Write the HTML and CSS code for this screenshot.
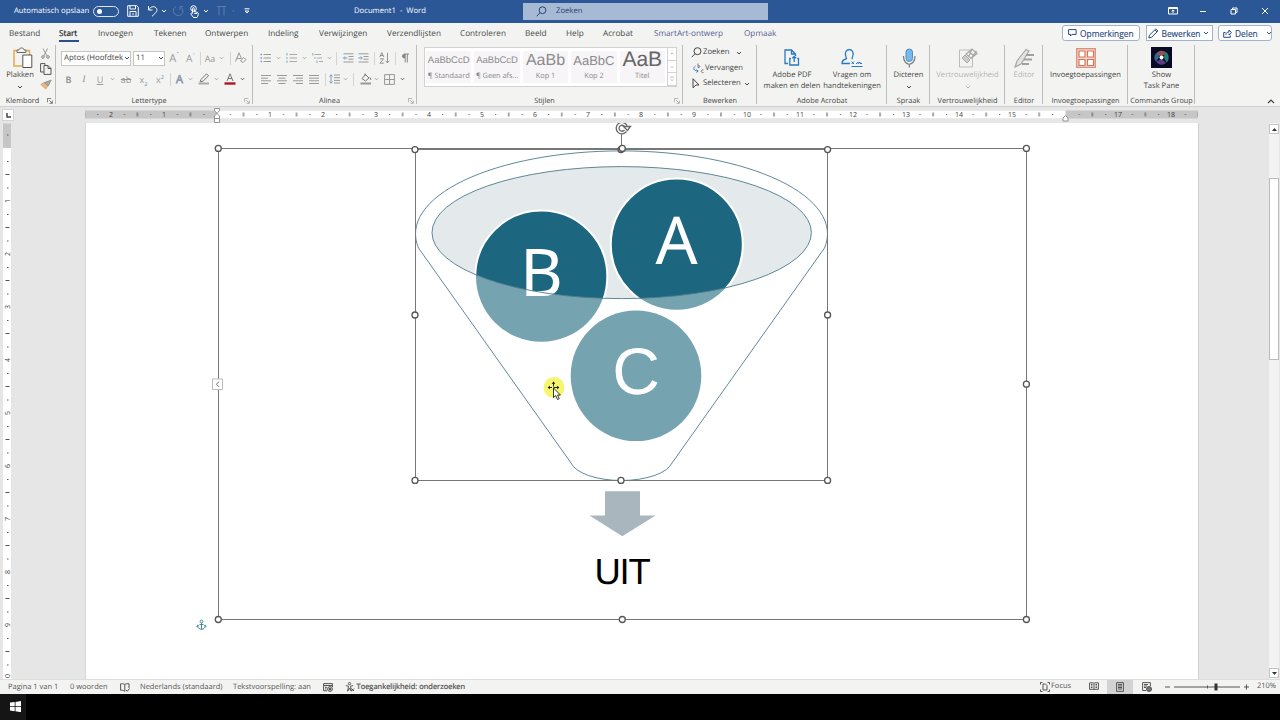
FILE: index.html
```html
<!DOCTYPE html>
<html lang="nl">
<head>
<meta charset="utf-8">
<title>Document1 - Word</title>
<link rel="stylesheet" href="styles.css">
</head>
<body>
<svg class="defs" width="0" height="0">
  <defs>
    <symbol id="chev" viewBox="0 0 6 4"><path d="M1 1l2 2 2-2" fill="none" stroke="currentColor" stroke-width="1"/></symbol>
    <symbol id="launch" viewBox="0 0 7 7"><path d="M.5 5V.5H5M2.500 2.500l3.500 3.500M6.200 3v3.200H3" fill="none" stroke="currentColor" stroke-width=".8"/></symbol>
  </defs>
</svg>
<div class="app">
  <header class="titlebar">
    <span class="autosave">Automatisch opslaan</span>
    <span class="toggle"><i></i></span>
    <div class="quick">
      <svg width="12" height="12" viewBox="0 0 12 12"><path d="M.7.7h9l1.600 1.600v9H.7zM3 .7v3.300h5.500V.7M3 11.200V6.500h6v4.700M5 9h2"/></svg>
      <svg width="12" height="12" viewBox="0 0 12 12"><path d="M1.500 1v4h4M1.700 4.800C3.500 1.500 7 .8 9 2.800c2.200 2.300.5 4.600-4 8.500"/></svg>
      <svg width="6" height="4"><use href="#chev"/></svg>
      <svg class="dim" width="12" height="12" viewBox="0 0 12 12"><path d="M4 1.500C0 3.500.5 10 6 10.500s6.500-6 2.500-8.500M8 5V1.500h3"/></svg>
      <svg width="11" height="13" viewBox="0 0 11 13"><circle cx="4.500" cy="3.500" r="2.800"/><path d="M3.600 8V3.500c0-1.200 1.600-1.200 1.600 0v3l3.500 1c1 .4.500 4-.8 5H4.500L1.800 9c0-1 1-1.200 1.800-.5M5.200 8.500h3"/></svg>
      <svg width="6" height="4"><use href="#chev"/></svg>
      <svg class="dim" width="12" height="12" viewBox="0 0 12 12"><path d="M1 1.500h9M3 1.500v9M8 1.500v9"/></svg>
      <svg class="dim" width="4" height="4" viewBox="0 0 4 4"><path d="M.5 2h2"/></svg>
      <svg width="6" height="6" viewBox="0 0 6 6"><path d="M.5.8h5M1 3l2 2 2-2z"/></svg>
    </div>
    <span class="doctitle">Document1&nbsp; -&nbsp; Word</span>
    <div class="search"><svg width="11" height="11" viewBox="0 0 11 11"><circle cx="6.500" cy="4.200" r="3.400"/><path d="M4 6.800L.7 10.200"/></svg><span>Zoeken</span></div>
    <div class="winbtns">
      <svg width="10" height="8" viewBox="0 0 10 8"><path d="M.5.5h9v6.500h-9zM.5 1.500h9M5 6V3M3.700 4.200L5 2.900l1.300 1.300"/></svg>
      <svg width="10" height="8" viewBox="0 0 10 8"><path d="M2 4.500h6"/></svg>
      <svg width="10" height="8" viewBox="0 0 10 8"><path d="M2 2.500h4.500V7H2zM3.500 2.500V1H8v4.500H6.500"/></svg>
      <svg width="10" height="8" viewBox="0 0 10 8"><path d="M2 1l6 6M8 1L2 7"/></svg>
    </div>
  </header>

  <nav class="tabs">
    <span>Bestand</span><span class="active">Start</span><span>Invoegen</span><span>Tekenen</span><span>Ontwerpen</span><span>Indeling</span><span>Verwijzingen</span><span>Verzendlijsten</span><span>Controleren</span><span>Beeld</span><span>Help</span><span>Acrobat</span><span class="ctx">SmartArt-ontwerp</span><span class="ctx">Opmaak</span>
    <div class="actions">
      <button class="act notes"><svg width="9" height="8" viewBox="0 0 9 8"><path d="M.6.6h7.500v4.800H4L2.500 7V5.400H.6z"/></svg>Opmerkingen</button>
      <button class="act edit"><svg width="11" height="11" viewBox="0 0 11 11"><path d="M.8 10l.8-3L7.800.9l2.100 2.100L3.700 9.200zM7 2l2 2"/></svg>Bewerken<svg width="6" height="4"><use href="#chev"/></svg></button>
      <button class="act share"><svg width="9" height="9" viewBox="0 0 9 9"><path d="M2.500 3.500H.7v4.800h6.600V6.500M2.800 6c.2-2.200 1.500-3 3.200-3V1.200l2.500 2.500L6 6V4.500"/></svg>Delen<svg width="6" height="4"><use href="#chev"/></svg></button>
    </div>
  </nav>

  <section class="ribbon">
    <div class="group tools">
      <div class="clip">
        <div class="big">
          <svg class="paste" width="22" height="22" viewBox="0 0 22 22"><path d="M5 3.500H2V19h8M14 3.500h3.500V8" stroke="#e3a94e" stroke-width="1.500"/><path d="M5 5.500V3h2C7 .3 12 .3 12 3h2v2.500z" stroke="#666"/><path d="M10.800 8h9v12.500h-9z" stroke="#555" fill="#fff"/></svg>
          <span>Plakken</span><svg width="6" height="4"><use href="#chev"/></svg>
        </div>
        <div class="side">
          <svg width="9" height="11" viewBox="0 0 9 11"><path d="M2 .5l4 7.500M6.500.5L2.800 8" stroke="#999"/><circle cx="2" cy="9" r="1.300" stroke="#888"/><circle cx="7" cy="9" r="1.300" stroke="#888"/></svg>
          <svg width="12" height="12" viewBox="0 0 12 12"><path d="M4 9H.6V.6H5V2M4 2.500h4l3 3v5.900H4zM8 2.500v3h3" stroke="#555"/></svg>
          <svg width="12" height="11" viewBox="0 0 12 11"><path d="M.8 5.500l5 4.500 2-3-3.800-3.500z" fill="#edb680" stroke="#c98a4e" stroke-width=".6"/><path d="M4.500 3.500l3.800 3.400L11.200 1z" fill="#aaa" stroke="#777" stroke-width=".6"/></svg>
        </div>
      </div>
      <footer><span>Klembord</span><svg class="dark" width="6" height="6"><use href="#launch"/></svg></footer>
    </div>

    <div class="group tools">
      <div class="rows">
        <div class="font1">
          <span class="combo">Aptos (Hoofdtek<svg width="6" height="4"><use href="#chev"/></svg></span>
          <span class="combo">11<svg width="6" height="4"><use href="#chev"/></svg></span>
          <span class="gA">A<sup>ˆ</sup></span><span class="gA sm">A<sup>ˇ</sup></span><hr>
          <span class="gAa">Aa</span><svg width="5" height="4"><use href="#chev"/></svg><hr>
          <svg width="12" height="12" viewBox="0 0 12 12"><path d="M.5 9.500L4 .8l2.500 6M1.800 6.500h4" stroke="#999"/><path d="M5.500 9l3-3.500 2.500 2-3 3z" stroke="#999"/></svg>
        </div>
        <div class="font2">
          <b>B</b><i class="ser">I</i><u>U</u><svg width="5" height="4"><use href="#chev"/></svg><s>ab</s><span class="x">x<sub>2</sub></span><span class="x">x<sup>2</sup></span><hr>
          <span class="fx">A</span><svg width="5" height="4"><use href="#chev"/></svg>
          <svg width="12" height="12" viewBox="0 0 12 12"><path d="M3 6.500L8.500.8l2 2L5 8.200l-3 .6z" stroke="#777"/><path d="M.5 9.500h10.500v2H.5z" fill="#aaa" stroke="none"/></svg><svg width="5" height="4"><use href="#chev"/></svg>
          <svg width="12" height="12" viewBox="0 0 12 12"><path d="M3 8L6 .8 9 8M4 5.500h4" stroke="#777"/><path d="M.5 9.300h11v2.400H.5z" fill="#b3122b" stroke="none"/></svg><svg class="dark" width="5" height="4"><use href="#chev"/></svg>
        </div>
      </div>
      <footer><span>Lettertype</span><svg width="6" height="6"><use href="#launch"/></svg></footer>
    </div>

    <div class="group tools">
      <div class="rows">
        <div class="par1">
          <svg width="11" height="10" viewBox="0 0 11 10"><path d="M3.500 1.500H11M3.500 5H11M3.500 8.500H11" stroke="#999"/><path d="M.5 1.500H2M.5 5H2M.5 8.500H2" stroke="#7b9dc4" stroke-width="1.500"/></svg><svg width="5" height="4"><use href="#chev"/></svg>
          <svg width="11" height="10" viewBox="0 0 11 10"><path d="M3.500 1.500H11M3.500 5H11M3.500 8.500H11" stroke="#aaa"/><path d="M1 0v2.500M1 4v2M1 7.500V10" stroke="#8aa8ca"/></svg><svg width="5" height="4"><use href="#chev"/></svg>
          <svg width="11" height="10" viewBox="0 0 11 10"><path d="M2.500 1.500H9M5 5h5M7 8.500h4" stroke="#aaa"/><path d="M.8 0v2.500M3 4v2M5 7.500V10" stroke="#8aa8ca"/></svg><svg width="5" height="4"><use href="#chev"/></svg><hr>
          <svg width="11" height="10" viewBox="0 0 11 10"><path d="M.5.8h10M5.500 3.500h5M5.500 6.200h5M.5 9h10" stroke="#999"/><path d="M4.500 5h-4M2 3.500L.6 5 2 6.500" stroke="#7b9dc4"/></svg>
          <svg width="11" height="10" viewBox="0 0 11 10"><path d="M.5.8h10M5.500 3.500h5M5.500 6.200h5M.5 9h10" stroke="#999"/><path d="M.3 5h4M2.800 3.500L4.200 5 2.800 6.500" stroke="#7b9dc4"/></svg><hr>
          <svg width="11" height="12" viewBox="0 0 11 12"><path d="M.8 5L2.800.6 4.800 5M1.500 3.500h2.600M1 6.800h3.500L1 11.200h3.800M8.500.8v10M6.600 8.800l1.900 2 1.900-2" stroke="#888" stroke-width=".9"/></svg><hr>
          <svg width="9" height="10" viewBox="0 0 9 10"><path d="M4 .8C0 .8 0 5.500 4 5.500z" fill="#888" stroke="none"/><path d="M3 1h5M4.200 1v8.500M6.300 1v8.500" stroke="#888"/></svg>
        </div>
        <div class="par2">
          <svg width="10" height="9" viewBox="0 0 10 9"><path d="M0 .5h10M0 3.200h7M0 5.800h10M0 8.500h7"/></svg>
          <svg width="10" height="9" viewBox="0 0 10 9"><path d="M0 .5h10M1.500 3.200h7M0 5.800h10M1.500 8.500h7"/></svg>
          <svg width="10" height="9" viewBox="0 0 10 9"><path d="M0 .5h10M3 3.200h7M0 5.800h10M3 8.500h7"/></svg>
          <svg width="10" height="9" viewBox="0 0 10 9"><path d="M0 .5h10M0 3.200h10M0 5.800h10M0 8.500h10"/></svg><hr>
          <svg width="11" height="10" viewBox="0 0 11 10"><path d="M5 1h6M5 3.700h6M5 6.400h6M5 9h6" stroke="#999"/><path d="M2 .8v8.400M.5 2.500L2 .8l1.500 1.700M.5 7.500L2 9.200l1.500-1.700" stroke="#7b9dc4"/></svg><svg width="5" height="4"><use href="#chev"/></svg><hr>
          <svg width="12" height="12" viewBox="0 0 12 12"><path d="M2 5.500l3.500-4 3.500 3.500-3.500 3zM5 3V.5M10 4.500l1 2.500" stroke="#777"/><path d="M.5 9.500h10.500v2H.5z" fill="#999" stroke="none"/></svg><svg width="5" height="4"><use href="#chev"/></svg>
          <svg width="11" height="11" viewBox="0 0 11 11"><path d="M.6.6h9.800v9.800H.6zM5.500.6v9.800M.6 5.500h9.800"/></svg><svg class="dark" width="5" height="4"><use href="#chev"/></svg>
        </div>
      </div>
      <footer><span>Alinea</span><svg width="6" height="6"><use href="#launch"/></svg></footer>
    </div>

    <div class="group tools">
      <div class="gallery">
        <div class="style"><em>AaBbCcD</em><span>¶ Standaard</span></div>
        <div class="style"><em>AaBbCcD</em><span>¶ Geen afs...</span></div>
        <div class="style"><em class="h1">AaBb</em><span>Kop 1</span></div>
        <div class="style"><em class="h2">AaBbC</em><span>Kop 2</span></div>
        <div class="style"><em class="ti">AaB</em><span>Titel</span></div>
        <div class="spin"><svg viewBox="0 0 9 13"><path d="M3 7l1.500-1.500L6 7"/></svg><svg viewBox="0 0 9 13"><path d="M3 6l1.500 1.500L6 6"/></svg><svg viewBox="0 0 9 13"><path d="M2.500 4.500h4M3 7l1.500 1.500L6 7"/></svg></div>
      </div>
      <footer><span>Stijlen</span><svg width="6" height="6"><use href="#launch"/></svg></footer>
    </div>

    <div class="group">
      <div class="find">
        <div><svg width="11" height="11" viewBox="0 0 11 11"><circle cx="6.500" cy="4.200" r="3.500"/><path d="M4 6.800L.7 10.200"/></svg>Zoeken<svg class="far" width="6" height="4"><use href="#chev"/></svg></div>
        <div><svg width="11" height="11" viewBox="0 0 11 11"><path d="M5 .5v4M5 3c2-1 3 1.500 0 1.700M10.500 7c-3-.8-3 3.200 0 2.500" stroke="#777"/><path d="M2.500 3C-.5 5 .5 8 5 8M3.500 6.500L5.200 8 3.500 9.500" stroke="#3b78c0"/></svg>Vervangen</div>
        <div><svg width="11" height="11" viewBox="0 0 11 11"><path d="M2 .7l6 6.300H5L2 9.800z"/></svg>Selecteren<svg width="6" height="4"><use href="#chev"/></svg></div>
      </div>
      <footer><span>Bewerken</span></footer>
    </div>

    <div class="group">
      <div class="pair">
        <div class="big"><svg width="20" height="20" viewBox="0 0 20 20"><g stroke="#2878c8" stroke-width="1.300"><path d="M6 15.500H3V2h6.500l4 4v2M9.500 2v4h4M9 10.500H7.800V17h8.700v-6.500h-1.200M12.200 14V8.500M10.300 10.200l1.900-1.900 1.900 1.900"/></g></svg><span>Adobe PDF</span><span>maken en delen</span></div>
        <div class="big"><svg width="22" height="20" viewBox="0 0 22 20"><g stroke="#2878c8" stroke-width="1.300"><path d="M9 15.500H1c0-3 2-4 4-4.500.8-.4.500-1.200 0-2C3 5 5.300 1.500 8.300 1.500S13.500 5 11.500 9c-.5.900-.7 1.600.2 2"/><path d="M10.500 18.500h11M10.500 13.500l2.500 2.500M13 13.500L10.500 16M15 16l2-2v1.500l2-1.500v1.500h2" stroke-width="1"/></g></svg><span>Vragen om</span><span>handtekeningen</span></div>
      </div>
      <footer><span>Adobe Acrobat</span></footer>
    </div>

    <div class="group">
      <div class="big"><svg width="14" height="20" viewBox="0 0 14 20"><rect x="4" y="1" width="6.500" height="12.500" rx="3.200" fill="#7ab8ea" stroke="#4a8cc8"/><path d="M1.500 8c0 11 11.500 11 11.500 0M7.300 16v3.500" stroke="#777" stroke-width="1.200"/></svg><span>Dicteren</span><svg width="6" height="4"><use href="#chev"/></svg></div>
      <footer><span>Spraak</span></footer>
    </div>
    <div class="group">
      <div class="big off"><svg width="20" height="20" viewBox="0 0 20 20"><path d="M12 2H1.500v17h13V10" stroke="#bbb"/><path d="M4 10l3-3 5 5-3 3z" fill="#ccc" stroke="#aaa"/><path d="M8 6l6-5 5 4.500-6 5zM11 3.500l5 4.500M14 1l-3 7M18.500 3l-5 7" stroke="#aaa" stroke-width="1.300"/></svg><span>Vertrouwelijkheid</span><svg width="6" height="4"><use href="#chev"/></svg></div>
      <footer><span>Vertrouwelijkheid</span></footer>
    </div>
    <div class="group">
      <div class="big off"><svg width="20" height="20" viewBox="0 0 20 20"><path d="M1 19l2-6L12 1.500l3 1.500L7 16z" fill="#e4e4e4" stroke="#a8a8a8" stroke-width="1.200"/><path d="M12 7h8M10 11.500h8M8 16h7" stroke="#a0a0a0" stroke-width="2"/></svg><span>Editor</span></div>
      <footer><span>Editor</span></footer>
    </div>
    <div class="group">
      <div class="big"><svg width="20" height="20" viewBox="0 0 20 20"><path d="M.7.7h18.600v18.600H.7z" fill="#f6d5c8" stroke="#d9907a" stroke-width="1.300"/><path d="M3 3h6v6H3zM11.500 3h6v6h-6zM3 11.500h6v6H3zM11.500 11.500h6v6h-6z" fill="#fff" stroke="#cf7a60" stroke-width="1.200"/></svg><span>Invoegtoepassingen</span></div>
      <footer><span>Invoegtoepassingen</span></footer>
    </div>
    <div class="group">
      <div class="big"><svg width="21" height="21" viewBox="0 0 21 21"><path d="M0 0h21v21H0z" fill="#070a24" stroke="none"/><path d="M5 8.500c0-6 10-6 10.500-1.500L10.500 9z" fill="#8d5358" stroke="none"/><path d="M15 5c4 3 3 9 .5 10.500L12.500 10z" fill="#247d78" stroke="none"/><path d="M15 15.500c-3 4-8.500 2-10-1L10.500 12z" fill="#5a3c86" stroke="none"/><path d="M5 14.500C2.500 12 3 8 5.500 6L8.500 10z" fill="#2b6a88" stroke="none"/><circle cx="10.500" cy="10.500" r="2" fill="#fff" stroke="none"/></svg><span>Show</span><span>Task Pane</span></div>
      <footer><span>Commands Group</span></footer>
    </div>
    <div class="collapse"><svg width="8" height="5" viewBox="0 0 8 5"><path d="M1 4l3-3 3 3" stroke="#444" stroke-width="1.200"/></svg></div>
  </section>

  <section class="hruler">
    <div class="corner"><svg width="5" height="5" viewBox="0 0 5 5"><path d="M1 0v4h4" stroke="#444" stroke-width="1.500"/></svg></div>
    <svg class="scale" width="1113" height="16" viewBox="85 107 1113 16">
      <defs><pattern id="cm" x="217" y="110" width="53.050" height="9" patternUnits="userSpaceOnUse"><path d="M13 4h1v1h-1zM39.500 4h1v1h-1zM26 2.500h1v4h-1z" fill="#555"/></pattern></defs>
      <path d="M85 110.500h1113v8H85z" fill="#c6c6c6"/><path d="M217 110.500h848.500v8H217z" fill="#fff"/>
      <path d="M85 110h1113v9H85z" fill="url(#cm)"/>
      <g class="num"><text x="111" y="117">2</text><text x="164" y="117">1</text><text x="270" y="117">1</text><text x="323" y="117">2</text><text x="376" y="117">3</text><text x="429" y="117">4</text><text x="482" y="117">5</text><text x="535" y="117">6</text><text x="588" y="117">7</text><text x="641" y="117">8</text><text x="694" y="117">9</text><text x="747" y="117">10</text><text x="800" y="117">11</text><text x="853" y="117">12</text><text x="906" y="117">13</text><text x="959" y="117">14</text><text x="1012" y="117">15</text><text x="1118" y="117">17</text><text x="1171" y="117">18</text></g>
      <path d="M214.500 108.500h5v2l-2.500 3-2.500-3zM217 113.500l2.500 2.500v6.500h-5V116zM214.500 118.500h5M1063 121v-3l2.500-2.500 2.500 2.500v3z" fill="#fff" stroke="#888" stroke-width=".9"/>
    </svg>
  </section>

  <main class="work">
    <svg class="vruler" width="8" height="556" viewBox="3 123 8 556">
      <defs><pattern id="vcm" x="3" y="148" width="8" height="53" patternUnits="userSpaceOnUse"><path d="M4 13h1.500v1H4zM4 39.500h1.500v1H4zM2.500 26h4v1h-4z" fill="#555"/></pattern></defs>
      <path d="M3 123.500h8V148H3z" fill="#c6c6c6"/><path d="M3 148h8v531H3z" fill="#fff"/><path d="M3 123.500h8V679H3z" fill="url(#vcm)"/>
      <g class="num"><text transform="translate(10 201) rotate(-90)">1</text><text transform="translate(10 254) rotate(-90)">2</text><text transform="translate(10 307) rotate(-90)">3</text><text transform="translate(10 360) rotate(-90)">4</text><text transform="translate(10 413) rotate(-90)">5</text><text transform="translate(10 466) rotate(-90)">6</text><text transform="translate(10 519) rotate(-90)">7</text><text transform="translate(10 572) rotate(-90)">8</text><text transform="translate(10 625) rotate(-90)">9</text><text transform="translate(10 678) rotate(-90)">10</text></g>
    </svg>
    <div class="page">
      <svg width="1112" height="556" viewBox="86 123 1112 556">
        <defs><clipPath id="mouth"><ellipse cx="621.700" cy="232.600" rx="189.700" ry="66"/></clipPath></defs>
        <ellipse cx="621.700" cy="232.600" rx="189.700" ry="66" fill="#e4e9ec"/>
        <g fill="#76a3b0"><circle cx="676.800" cy="244.400" r="65.300"/><circle cx="541.300" cy="276.500" r="65.300"/><circle cx="636" cy="375.800" r="65.300"/></g>
        <g clip-path="url(#mouth)" fill="#1c667f" stroke="#fff" stroke-width="2"><circle cx="541.300" cy="276.500" r="66"/><circle cx="676.800" cy="244.400" r="66"/></g>
        <g class="ball"><text x="676.500" y="264">A</text><text x="541.500" y="295.500">B</text><text class="c" x="636" y="393.800">C</text></g>
        <ellipse cx="621.700" cy="232.600" rx="189.700" ry="66" fill="none" stroke="#4d7c8a" stroke-width=".9"/>
        <path d="M418.500 248A206 83 0 1 1 824.500 248L672 463A51.400 21.500 0 0 1 571 463Z" fill="none" stroke="#4d7c8a" stroke-width=".9"/>
        <path d="M605 491.300h35v24.200h15.500L622.300 536.200 589.500 515.500H605z" fill="#a9b6be"/>
        <text class="out" x="622" y="583.600">UIT</text>
        <g fill="none" stroke="#777"><path d="M218.500 148.500h808v471h-808z"/><path d="M415.500 149.500h412v331h-412zM621.500 134v14"/></g>
        <g fill="#fff" stroke="#555" stroke-width="1.300"><circle cx="621" cy="149.600" r="3"/><circle cx="218.300" cy="148.400" r="3"/><circle cx="622.300" cy="148.400" r="3"/><circle cx="1026.400" cy="148.400" r="3"/><circle cx="1026.400" cy="384.200" r="3"/><circle cx="218.300" cy="619.500" r="3"/><circle cx="622.300" cy="619.500" r="3"/><circle cx="1026.400" cy="619.500" r="3"/><circle cx="415" cy="149.600" r="3"/><circle cx="827.600" cy="149.600" r="3"/><circle cx="415" cy="315" r="3"/><circle cx="827.600" cy="315" r="3"/><circle cx="415" cy="480.400" r="3"/><circle cx="621" cy="480.400" r="3"/><circle cx="827.600" cy="480.400" r="3"/></g>
        <path d="M626.500 131.500A5.700 5.700 0 1 1 627 125.500M624.500 130A3 3 0 1 1 624.800 127M623.500 126.500h7l-3 4z" fill="none" stroke="#666" stroke-width="1.300"/>
        <path d="M212.500 379h10v10.500h-10z" fill="#fff" stroke="#bbb"/><path d="M219 381.500l-2.500 2.700 2.500 2.700" fill="none" stroke="#777"/>
        <circle cx="554" cy="387.500" r="10.500" fill="#f6f56e"/>
        <path d="M553.500 383v9M548.500 387.500h10" stroke="#222" stroke-width="1" stroke-dasharray="3.500 1.500"/><path d="M553.500 381.500l1.800 2.200h-3.600zM547.700 387.500l2.200-1.800v3.600zM559.300 387.500l-2.200-1.800v3.600z" fill="#111"/>
        <path d="M553.500 388v9.500l2.200-2 1.800 4 1.800-.8-1.800-3.700h2.900z" fill="#fff" stroke="#222" stroke-width=".9"/>
        <g fill="none" stroke="#4489a0" stroke-width="1"><circle cx="201.500" cy="621.500" r="1.400"/><path d="M201.500 623v6.500M199.500 624.500h4M197.500 625.500c0 5 8 5 8 0M197 627l.5-1.800 1.500 1M206 627l-.5-1.800-1.500 1"/></g>
      </svg>
    </div>
    <div class="scroll"><span class="arrow"><svg width="5" height="3" viewBox="0 0 5 3"><path d="M0 3L2.500 0 5 3z"/></svg></span><span class="thumb"></span><span class="arrow"><svg width="5" height="3" viewBox="0 0 5 3"><path d="M0 0l2.500 3L5 0z"/></svg></span></div>
  </main>

  <footer class="status">
    <div class="left">
      <span>Pagina 1 van 1</span><span>0 woorden</span>
      <svg width="10" height="9" viewBox="0 0 10 9"><path d="M4.800 1.500C3.500.6 2 .6.600.8v6.500c1.400-.2 3 0 4.200 1M4.800 1.500C6 .6 7.500.6 9 .8V5M4.800 1.500v6.800M6 7l1.200 1.300L9.500 5.500"/></svg>
      <span>Nederlands (standaard)</span><span>Tekstvoorspelling: aan</span>
      <svg width="10" height="9" viewBox="0 0 10 9"><path d="M4 7.800H.6V.6h8.800V4M.6 2.500h8.800M2 4.300h2M2 6h1.500"/><circle cx="7" cy="6" r="2.400"/><circle cx="7" cy="6" r="1" fill="#444"/></svg>
      <svg width="10" height="10" viewBox="0 0 10 10"><circle cx="4.500" cy="1.700" r="1.200"/><path d="M.8 3.500l2.700.8-.8 4.900 1.800-3 1.800 3-.8-4.900 2.700-.8M6.500 6.500l2.500 2.500M9 6.500L6.500 9"/></svg>
      <span class="strong">Toegankelijkheid: onderzoeken</span>
    </div>
    <div class="right">
      <svg width="10" height="10" viewBox="0 0 10 10"><path d="M.5 2.500v-2h2M7.500.5h2v2M9.500 7.500v2h-2M2.500 9.500h-2v-2M3 2h2.500L7 3.500V8H3z"/></svg><span>Focus</span>
      <svg width="10" height="9" viewBox="0 0 10 9"><path d="M.6.8h3.800L5 1.500l.6-.7h3.800v6.500H5.700L5 8l-.7-.7H.6zM5 1.500V8M2 2.500h1.500M2 4h1.500M6.500 2.500H8M6.500 4H8M2 5.500h1.500M6.500 5.500H8"/></svg>
      <span class="on"><svg width="8" height="10" viewBox="0 0 8 10"><path d="M.6.6h6.800v8.800H.6zM2 2.500h4M2 4h4M2 5.500h4M2 7h4"/></svg></span>
      <svg width="10" height="10" viewBox="0 0 10 10"><path d="M4 8.500H.6V.6h7.800V4M2 2.500h4M2 4h3M2 5.500h2"/><circle cx="7" cy="7" r="2.500" fill="#777"/></svg>
      <svg width="84" height="8" viewBox="0 0 84 8"><path d="M0 4h5M9 4h66M42.500 2.500v3M79 4h5M81.500 1.500v5"/><path d="M49.500.5h3v7h-3z" fill="#333" stroke="none"/></svg>
      <span class="zoom">210%</span>
    </div>
  </footer>
  <footer class="taskbar"><span><svg width="11" height="11" viewBox="0 0 11 11"><path d="M0 1.600L4.700 1v4.200H0zM5.500.9L11 0v5.200H5.500zM0 6h4.700v4.200L0 9.500zM5.500 6H11v5.200l-5.500-.9z" fill="#fff" stroke="none"/></svg></span></footer>
</div>
</body>
</html>
```
FILE: styles.css
```css
* { box-sizing: border-box; }
body { margin: 0; font-family: "Open Sans", "Noto Sans", sans-serif; font-size: 8.4px; line-height: 11px; color: #444; text-rendering: geometricPrecision; }
svg { fill: none; stroke: currentColor; stroke-width: 1; flex: none; }
svg text { stroke: none; fill: #444; }
.defs { position: absolute; }
.app { width: 1280px; height: 720px; display: grid; grid-template-columns: 1280px; grid-template-rows: 22.5px 21.5px 63px 16px 556px 14.5px 26.5px; overflow: hidden; background: #e6e6e6; white-space: nowrap; }

.titlebar { background: #2c5796; color: #fff; display: grid; grid-template-columns: 79px 26px 150px 270px 245px 1fr; padding-left: 14px; align-items: center; font-size: 7.700px; }
.toggle { width: 26px; height: 11px; border: 1px solid #dfe8f4; border-radius: 6px; padding: 2px; }
.toggle i { display: block; width: 5px; height: 5px; border-radius: 50%; background: #fff; margin-left: 1px; }
.quick { display: grid; grid-template-columns: 27px 14px 7px 22px 11px 11px 21px 4px 22px; justify-items: center; align-items: center; }
.quick .dim { opacity: .22; }
.doctitle { padding-left: 85px; }
.search { margin-left: -16px; width: 245px; height: 17px; background: #a6bad5; color: #26436f; display: flex; align-items: center; padding-left: 13px; gap: 9px; }
.winbtns { display: grid; grid-template-columns: repeat(4, 30.700px); justify-content: end; justify-items: center; }

.tabs { background: #f3f4f2; display: grid; grid-template-columns: 50px 39px 56px 51px 63px 51px 68px 73px 65px 41px 37px 51px 90px 40px 1fr; padding-left: 9px; align-items: center; font-size: 8.200px; color: #484848; }
.tabs > .active { width: 20px; border-bottom: 2px solid #2b4f88; padding-top: 4px; height: 18px; color: #222; -webkit-text-stroke: .2px #222; }
.tabs > .ctx { color: #5a5c93; }
.actions { display: grid; grid-template-columns: 78px 67px 54px; gap: 5.500px; justify-content: end; padding-right: 8px; }
.act { height: 16px; border: 1px solid #9fb3cf; border-radius: 3px; background: #fff; font: inherit; font-size: 8.400px; -webkit-text-stroke: .15px #2a4c80; color: #2a4c80; padding: 0 5px; display: flex; gap: 3px; align-items: center; }
.edit { border-radius: 0; padding: 0 1px; }
.share { padding: 0 4px; }
.share svg:last-child { margin-left: 5px; }

.ribbon { background: #f3f4f2; display: grid; grid-template-columns: 56px 197px 164px 266px 74px 130px 43px 75px 38px 85px 67px 1fr; border-bottom: 1px solid #d0d0d0; font-size: 7.600px; }
.group { display: grid; grid-template-rows: 51px 10px; margin-top: 1px; min-width: 0; background: linear-gradient(#bdbdbd, #bdbdbd) right top / 1px 59px no-repeat; }
.group > footer { display: flex; justify-content: center; align-items: center; position: relative; font-size: 7.300px; color: #444; }
.tools > footer { padding-right: 11px; }
.group > footer svg { position: absolute; right: 3px; color: #999; }
.group > footer .dark, .dark { color: #444; }
.big { display: grid; grid-template-rows: 25px 11px 11px; justify-items: center; align-items: center; }
.big.off { color: #b5b5b5; }
.clip { display: grid; grid-template-columns: 36px 15px; padding-left: 2px; }
.paste { margin-left: 5px; }
.side { display: grid; grid-template-rows: 16px 16px 15px; justify-items: center; align-items: center; }
.rows { display: grid; grid-template-rows: 26px 16px; padding-left: 5px; align-items: center; align-content: start; }
.rows > div { display: grid; align-items: center; justify-items: center; color: #999; }
.rows hr { width: 1px; height: 13px; border: 0; background: #d4d4d4; margin: 0; }
.rows sup, .rows sub { font-size: 60%; line-height: 0; color: #5f8fc4; }
.font1 { grid-template-columns: 70px 2px 32px 18px 15px 5px 14px 8px 10px 12px; }
.font1 > .combo:nth-child(2) { grid-column: 3; }
.combo { justify-self: stretch; height: 15px; border: 1px solid #c6c6c6; background: #fff; color: #444; display: flex; align-items: center; justify-content: space-between; padding: 0 0 0 2px; font-size: 7.800px; }
.gA { font-size: 11px; }
.gA.sm { font-size: 10px; }
.gAa { font-size: 9px; }
.font2 { grid-template-columns: 15px 16px 16px 9px 18px 17px 16px 4px 15px 7px 19px 7px 19px 7px; font-size: 9px; }
.font2 b { font-weight: 600; color: #888; }
.ser { font-family: "Liberation Serif", serif; font-size: 10px; }
.fx { font-size: 11px; color: #fff; -webkit-text-stroke: .8px #8d9dad; }
.par1, .par2 { margin-left: -1px; }
.par1 { grid-template-columns: 17px 9px 17px 8px 18px 6px 9px 15px 15px 6px 15px 6px 14px; }
.par2 { grid-template-columns: 17px 16px 16px 16px 6px 13px 8px 9px 15px 7px 19px 7px; }
.gallery { margin: 2px 6px 0 7px; height: 40px; border: 1px solid #d2d2d2; background: #fff; display: grid; grid-template-columns: repeat(5, 48.400px) 1fr; }
.style { margin: 3px 2px 3px 1px; background: #f7f5f7; display: grid; grid-template-rows: 19px 13px; justify-items: center; align-items: center; font-size: 7.300px; color: #888; }
.style em { font-family: "Liberation Sans", sans-serif; font-style: normal; font-size: 9.500px; line-height: 19px; color: #8c8c8c; }
.style .h1 { font-size: 16px; }
.style .h2 { font-size: 13px; }
.style .ti { font-size: 21px; color: #666; margin-top: -3px; }
.spin { display: grid; grid-template-rows: repeat(3, 1fr); }
.spin svg { width: 100%; height: 100%; border: solid #d2d2d2; border-width: 0 0 1px 1px; color: #aaa; min-height: 0; }
.find { display: grid; grid-template-rows: 15px 16px 15px; align-items: center; align-content: start; padding-left: 8px; font-size: 7.700px; }
.find > div { display: flex; align-items: center; gap: 1px; }
.find > div > svg:last-child { margin-left: 2px; }
.find > div > .far:last-child { margin-left: 6px; }
.pair { display: grid; grid-template-columns: 60px 60px; justify-content: center; }
.collapse { display: flex; justify-content: flex-end; align-items: flex-end; padding: 0 5px 2px; }

.hruler { display: grid; grid-template-columns: 12px 1113px; column-gap: 71px; padding-left: 2px; background: #e6e6e6; }
.corner { width: 12px; height: 12px; margin-top: 2px; background: #fdfdfd; border: 1px solid #d4d4d4; display: grid; place-items: center; }
.scale, .vruler { stroke: none; }
.num text { font-size: 7px; text-anchor: middle; }

.work { display: grid; grid-template-columns: 8px 1187px 1fr; padding: 0 1px 0 3px; background: #e6e6e6; }
.page { margin-left: 75px; background: #fff; box-shadow: 1px 0 #cfcfcf, -1px 0 #d6d6d6; }
.page svg { display: block; stroke: none; }
.ball text { font-family: "Noto Sans", sans-serif; font-size: 66px; fill: #fff; text-anchor: middle; }
.ball .c { font-family: "Liberation Sans", sans-serif; font-size: 66px; }
.page .out { font-family: "Liberation Sans", sans-serif; font-size: 36.500px; letter-spacing: -1.200px; fill: #000; text-anchor: middle; }
.scroll { width: 10px; justify-self: end; background: #f3f3f3; display: grid; grid-template-rows: 10px 44px 182px 1fr 10px; padding: 1px 0; }
.arrow { background: #fff; border: 1px solid #c4c4c4; display: grid; place-items: center; }
.arrow svg { fill: #333; stroke: none; }
.thumb { grid-row: 3; background: #fff; border: 1px solid #bbb; }
.arrow:last-child { grid-row: 5; }

.status { background: #f3f3f1; border-top: 1px solid #ddd; display: flex; justify-content: space-between; font-size: 7.500px; color: #555; }
.left, .right { display: grid; align-items: center; }
.left { grid-template-columns: 62px 50px 20px 93px 90px 21.500px 12px auto; padding: 1px 0 0 8px; }
.strong { -webkit-text-stroke: .2px #444; }
.right { grid-template-columns: 11px 32px 24px 26px 27px 97px 20px; padding-right: 3px; justify-items: start; height: 13.500px; }
.right > svg:nth-child(3), .right > svg:nth-child(5) { justify-self: center; }
.right > svg:nth-child(3) { margin-left: -3px; }
.right > svg:nth-child(6) { margin-left: 5px; }
.on { width: 26px; height: 100%; background: #d2d2d2; display: grid; place-items: center; }
.taskbar { background: #000; }
.taskbar span { width: 26px; height: 100%; background: #151515; display: grid; place-items: center; padding-left: 5px; }
```
